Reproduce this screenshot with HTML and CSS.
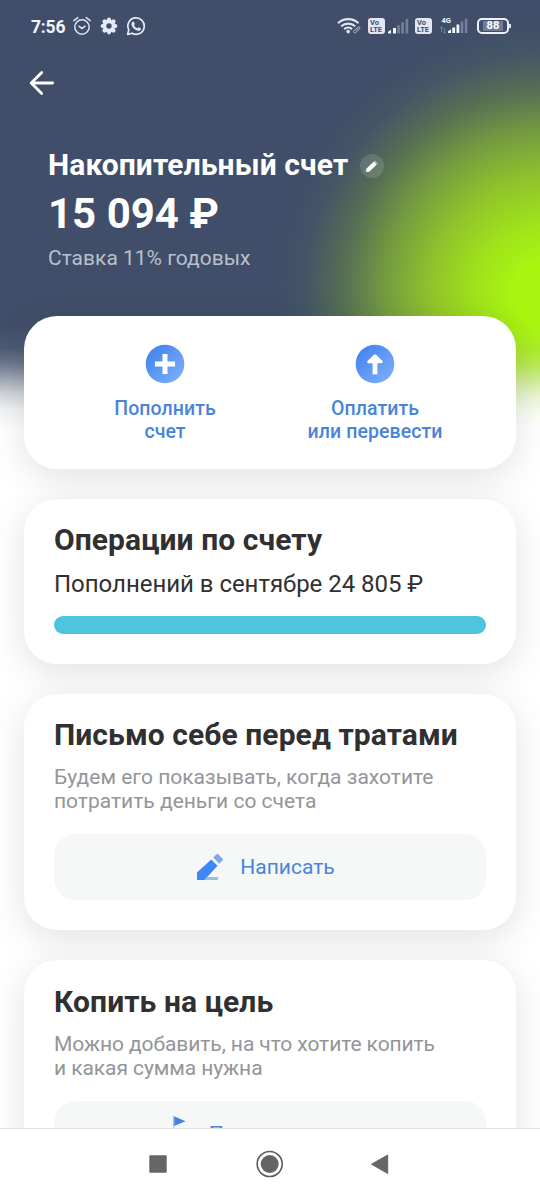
FILE: index.html
```html
<!DOCTYPE html>
<html lang="ru">
<head>
<meta charset="utf-8">
<title>Накопительный счет</title>
<link rel="stylesheet" href="styles.css">
</head>
<body>
<div class="screen">
  <main class="content">
    <div class="status">
      <span class="time">7:56</span>
      <svg class="ic-alarm" width="20" height="20" viewBox="0 0 20 20" fill="none" stroke="#dfe4f4" stroke-width="1.5" stroke-linecap="round" stroke-linejoin="round"><circle cx="10" cy="11" r="7.2"/><path d="M7 10.2l3 2.4 3-2.4M1.8 4.6l4-3M18.200 4.600l-4-3"/></svg>
      <svg class="ic-gear" width="18" height="18" viewBox="0 0 18 18"><g stroke="#e4e9f9" stroke-width="4.200" stroke-linecap="round"><path d="M9 2.700v12.600M2.700 9h12.600M4.500 4.500l9 9M13.500 4.500l-9 9"/></g><circle cx="9" cy="9" r="4.700" fill="none" stroke="#e4e9f9" stroke-width="3.400"/><circle cx="9" cy="9" r="2.700" fill="#404e69"/></svg>
      <svg class="ic-chat" width="20" height="20" viewBox="0 0 20 20"><path d="M1.600 18.400l1.200-4.500a8.200 8.200 0 1 1 3.200 3.300z" fill="none" stroke="#e4e9f9" stroke-width="1.700" stroke-linejoin="round"/><path d="M6.100 6.300c.6-1 1.500-1.100 1.900-.3l.7 1.600c.2.5-.1.900-.7 1.600.8 1.500 1.900 2.500 3.500 3.200.6-.8 1-1.200 1.400-1l1.800.9c.6.300.2 1.500-.5 2-1.200.9-3 .5-4.900-.6-1.700-1-3.100-2.700-3.700-4.400-.4-1.200-.1-2.200.5-3z" fill="#e4e9f9"/></svg>
      <div class="status-right">
        <svg class="ic-wifi" width="25" height="18" viewBox="0 0 25 18" fill="none" stroke="#e0e5f5" stroke-width="2.100"><path d="M1 6.200a15 15 0 0 1 20.500 0M4.200 9.300a10.500 10.500 0 0 1 14 0M7.300 12.100a6 6 0 0 1 7.800 0"/><circle cx="11.200" cy="14.600" r="1.800" fill="#e0e5f5" stroke="none"/><path d="M17 13.700l3.500-3.500c1.700-1.300 3.200.3 2 1.800l-3.700 3.600c-1.500 1.100-3.100-.5-1.800-1.900zM18.800 13.800l2.500-2.500" stroke="#aeb7ca" stroke-width="1"/></svg>
        <span class="volte"><span>Vo</span><span>LTE</span></span>
        <svg class="ic-sig1" width="21" height="16" viewBox="0 0 21 16"><path d="M0 15.500v-1.700l3-2v3.700zM5 10h3v5.500H5z" fill="#f5f7ff"/><path d="M9.200 7.200h2.600v8.300H9.200zM13.300 4.200h2.600v11.300h-2.600zM17.600 1h2.600v14.500h-2.600z" fill="#76829b"/></svg>
        <span class="volte volte-2"><span>Vo</span><span>LTE</span></span>
        <svg class="ic-sig2" width="28" height="18" viewBox="0 0 28 18"><path d="M1.500 16v-5M4.500 12v5M0 12.500l1.500-2 1.500 2M3 15.500l1.500 2 1.500-2" stroke="#6f7b95" stroke-width="1" fill="none"/><path d="M8 17v-1.800l3-2V17zM12.300 11.500h2.800V17h-2.800zM16.500 8.500h2.800V17h-2.800z" fill="#f5f7ff"/><path d="M20.700 5.500h2.600V17h-2.600zM24.800 2.400h2.600V17h-2.600z" fill="#76829b"/><text x="1.500" y="7" class="net">4G</text></svg>
        <span class="battery"><span>88</span></span>
      </div>
    </div>
    <header class="hero">
      <svg class="back" width="26" height="26" viewBox="0 0 26 26" fill="none" stroke="#fff" stroke-width="2.800" stroke-linecap="round" stroke-linejoin="round"><path d="M12.700 2.500L2.200 13l10.500 10.500M2.600 13h21"/></svg>
      <div class="title-row">
        <h1>Накопительный счет</h1>
        <span class="edit"><svg width="24" height="24" viewBox="0 0 24 24" stroke="#fff" stroke-width="4.200"><path d="M8.300 15.800l6-5.900" stroke-linecap="round"/><path d="M6.200 18v-3l3 2.700z" fill="#fff" stroke="none"/><path d="M15.200 9.100l1.200-1.200" stroke="#a9b8a9"/></svg></span>
      </div>
      <div class="amount">15 094 ₽</div>
      <div class="rate">Ставка 11% годовых</div>
    </header>

    <section class="card actions">
      <div class="action">
        <svg width="40" height="40" viewBox="0 0 40 40"><defs><linearGradient id="blue" x1="0" y1="0" x2="1" y2="1"><stop offset="0.150" stop-color="#4686ee"/><stop offset="1" stop-color="#83b2ff"/></linearGradient></defs><circle cx="20" cy="20" r="19.300" fill="url(#blue)"/><path d="M20 12.500v15M12.500 20h15" stroke="#fff" stroke-width="5" stroke-linecap="square"/></svg>
        <span>Пополнить<br>счет</span>
      </div>
      <div class="action">
        <svg width="40" height="40" viewBox="0 0 40 40"><circle cx="20" cy="20" r="19.300" fill="url(#blue)"/><path d="M20 28V14" stroke="#fff" stroke-width="4.800" stroke-linecap="square"/><path d="M13.700 17.800L20 11.800l6.300 6z" fill="#fff" stroke="#fff" stroke-width="3" stroke-linejoin="round"/></svg>
        <span>Оплатить<br>или перевести</span>
      </div>
    </section>

    <section class="card operations">
      <h2>Операции по счету</h2>
      <p class="summary">Пополнений в сентябре 24 805 ₽</p>
      <div class="bar"></div>
    </section>

    <section class="card letter">
      <h2>Письмо себе перед тратами</h2>
      <p class="hint">Будем его показывать, когда захотите<br>потратить деньги со счета</p>
      <div class="button">
        <svg width="28" height="28" viewBox="0 0 28 28"><path d="M1 27v-7.500L15.300 6.400l6.200 6.300L8.500 27z" fill="#3f86f7"/><path d="M17.300 4.600L20.200 1.500c.7-.7 1.500-.7 2.200 0l4 4c.6.7.6 1.400 0 2.100l-3 3.100z" fill="#7aa9e8"/><path d="M11 24h11.200v1.500c0 .9-.6 1.500-1.500 1.500H8.300z" fill="#96bbf3"/></svg>
        <span>Написать</span>
      </div>
    </section>

    <section class="card goal">
      <h2>Копить на цель</h2>
      <p class="hint hint-goal">Можно добавить, на что хотите копить<br>и какая сумма нужна</p>
      <div class="button">
        <svg class="flag" width="28" height="36" viewBox="0 0 28 36"><path d="M8.500 0l12 5.200-12 5z" fill="#4582e4"/><path d="M9 0v34" stroke="#9bbff4" stroke-width="1"/></svg>
        <span>Поставить цель</span>
      </div>
    </section>
  </main>
  <nav class="navbar">
    <svg width="26" height="28" viewBox="0 0 26 28"><rect x="4.300" y="5.300" width="17.400" height="17.400" rx="1" fill="#666"/></svg>
    <svg width="28" height="28" viewBox="0 0 28 28"><circle cx="14.700" cy="14" r="12.500" fill="none" stroke="#5c5c5c" stroke-width="1.600"/><circle cx="14.700" cy="14" r="9" fill="#646464"/></svg>
    <svg width="26" height="28" viewBox="0 0 26 28"><path d="M20.700 5v18.500L4.500 14.200z" fill="#666" stroke="#666" stroke-width="1" stroke-linejoin="round"/></svg>
  </nav>
</div>
</body>
</html>
```

FILE: styles.css
```css
* { box-sizing: border-box; }
body { margin: 0; font-family: Roboto, "Noto Sans", sans-serif; color: #303030; }
h1, h2, p { margin: 0; }
svg { display: block; flex: none; }

.screen { width: 540px; height: 1200px; overflow: hidden; display: flex; flex-direction: column; }
.content {
  height: 1128px;
  overflow: hidden;
  background:
    linear-gradient(to bottom, rgba(255,255,255,0) 325px, rgba(255,255,255,.07) 348px, rgba(255,255,255,.24) 364px, rgba(255,255,255,.5) 379px, rgba(255,255,255,.76) 394px, rgba(255,255,255,.93) 410px, #fff 428px),
    radial-gradient(circle 272px at 548px 295px, #abf511 0, #abf511 12%, #9fe21b 27%, #8fc12c 44%, rgba(125,169,57,.85) 60%, rgba(105,140,65,.55) 75%, rgba(85,112,90,.22) 89%, rgba(65,80,106,0) 100%),
    #404e69;
}

.status { height: 52px; padding: 0 28px 0 31px; display: flex; align-items: center; color: #f2f5ff; }
.time { font-size: 17.500px; font-weight: 700; line-height: 20px; width: 41px; padding-top: 1px; letter-spacing: -.2px; }
.ic-gear { margin-left: 8px; }
.ic-chat { margin-left: 8px; }
.status-right { margin-left: auto; display: flex; align-items: center; }
.volte { width: 17px; height: 16px; margin-left: 6px; border-radius: 3px; background: #e3e7f3; color: #404e69; display: flex; flex-direction: column; padding: 1px 0 0 2px; font-size: 7.500px; font-weight: 700; line-height: 7px; }
.ic-sig1 { margin-left: 3px; }
.volte-2 { margin-left: 6px; }
.ic-sig2 { margin: -3px 0 0 8px; }
.net { font: 700 7.500px Roboto, sans-serif; fill: #f2f5ff; }
.battery { position: relative; width: 32px; height: 16px; margin: 0 3px 0 9px; border: 2px solid #edf0fa; border-radius: 5px; padding: 1px 4px; display: flex; }
.battery span { flex: 1; background: #6f7c97; color: #fff; font-size: 11px; font-weight: 700; line-height: 10px; text-align: center; letter-spacing: .3px; }
.battery::after { content: ""; position: absolute; right: -4px; top: 4px; width: 2px; height: 4px; background: #dce1ef; }

.hero { height: 264px; padding: 18px 48px 0; color: #fff; }
.back { margin-left: -19px; }
.title-row { display: flex; align-items: center; margin-top: 51px; height: 36px; }
h1 { font-size: 30px; line-height: 36px; font-weight: 700; white-space: nowrap; letter-spacing: .1px; }
.edit { margin: 2px 0 0 12px; width: 24px; height: 24px; border-radius: 50%; background: rgba(255,255,255,.13); }
.amount { margin-top: 6px; font-size: 42px; line-height: 50px; font-weight: 700; white-space: nowrap; }
.rate { margin-top: 7px; font-size: 21px; line-height: 24px; color: #b9c0cd; white-space: nowrap; }

.card { margin: 0 24px 30px; padding: 0 30px; border-radius: 33px; background: #fff; box-shadow: 0 8px 36px rgba(0,0,0,.12); white-space: nowrap; }
.actions { height: 153px; padding-top: 28px; display: grid; grid-template-columns: 222px 198px; }
.action { display: flex; flex-direction: column; align-items: center; gap: 14px; color: #4a84d8; font-size: 19.500px; font-weight: 500; line-height: 22.500px; text-align: center; letter-spacing: .08px; }
.operations { height: 165px; padding-top: 23px; }
h2 { font-size: 30px; line-height: 36px; font-weight: 700; letter-spacing: .08px; }
.summary { margin-top: 12px; font-size: 24px; line-height: 28px; letter-spacing: -.03px; }
.bar { margin-top: 18px; height: 18px; border-radius: 9px; background: #4fc4df; }
.letter { height: 236px; padding-top: 23px; }
.hint { margin-top: 12px; font-size: 21px; line-height: 24px; color: #939598; }
.hint-goal { letter-spacing: -.08px; }
.button { margin-top: 21px; height: 66px; border-radius: 21px; background: #f6f7f7; display: flex; align-items: center; justify-content: center; gap: 16px; padding-right: 9px; color: #4a84d8; font-size: 21px; line-height: 24px; }
.goal { height: 236px; padding-top: 24px; }

.navbar { height: 72px; border-top: 1px solid #e3e3e3; background: #fff; display: flex; justify-content: center; align-items: center; gap: 84px; padding: 0 3px 1px 0; }
```
